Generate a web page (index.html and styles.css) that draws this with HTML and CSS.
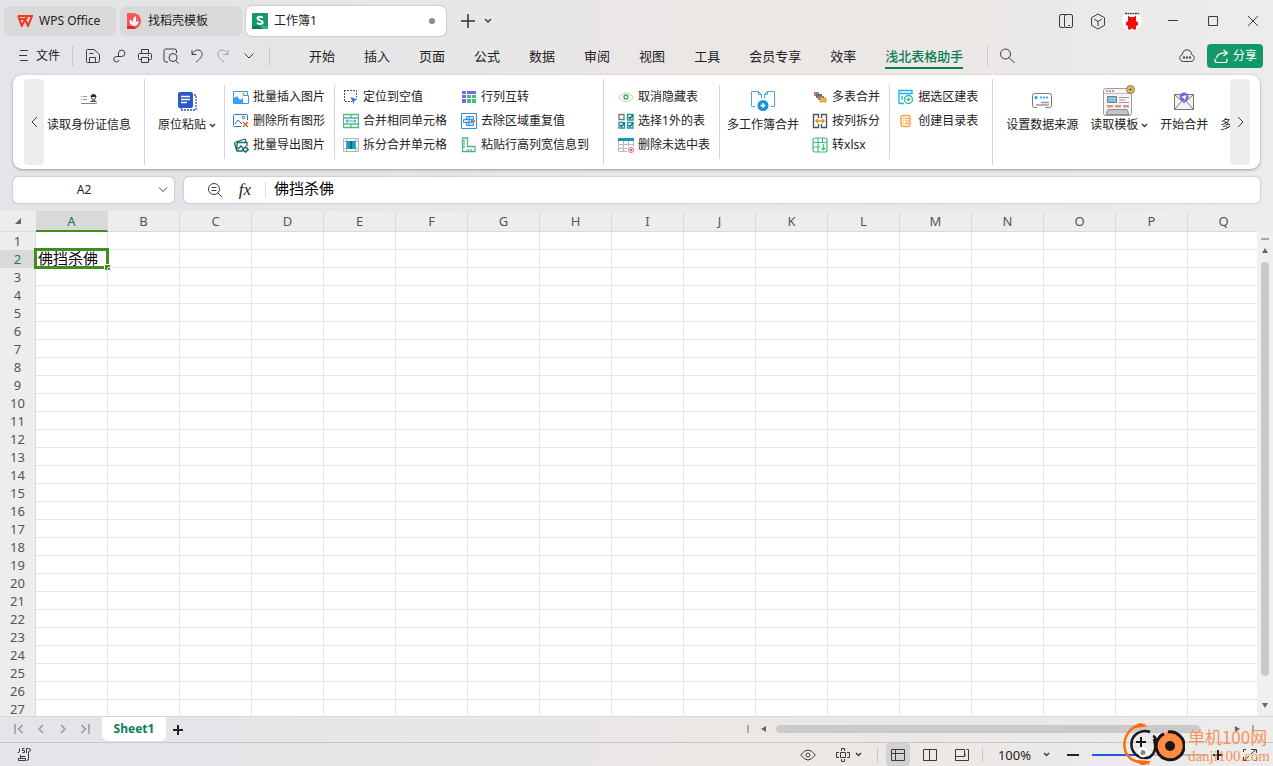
FILE: index.html
```html
<!DOCTYPE html>
<html lang="zh-CN">
<head>
<meta charset="utf-8">
<title>工作簿1 - WPS Office</title>
<link rel="stylesheet" href="styles.css">
</head>
<body>
<header class="titlebar">
  <button class="doc-tab home"><svg width="16" height="12" viewBox="0 0 16 12"><path d="M1 1h9.500L9 4H2.500M1.200 1l3.600 10L8 4.500l3 6.500L15 1h-4" fill="none" stroke="#f5361f" stroke-width="2"/></svg>WPS Office</button>
  <button class="doc-tab docer"><svg width="16" height="16" viewBox="0 0 16 16"><path d="M1 0h6a8 8 0 0 1 0 16H1z" fill="#f4575a"/><path d="M1 13h6l3 3H1z" fill="#d92c30"/><path d="M7 13C3 11 3.500 8 4 6.500c2 1 3 3 3 6.500zM7 13c-1-4 0-8 2.500-10C11 6 10 10 7 13zM7.500 13c1-3 2.500-4.500 5-5 0 3-2 5-5 5z" fill="#fff"/></svg>找稻壳模板</button>
  <button class="doc-tab current"><svg width="16" height="16" viewBox="0 0 16 16"><rect width="16" height="16" rx="1" fill="#14996a"/><path d="M0 13h8l3 3H0z" fill="#0a7a50"/><path d="M8 13h8v3h-5z" fill="#35b383"/><path d="M10.800 4.800C10 3.500 5.500 3 5.500 5.300S10.700 7 10.700 9.300 6 11.400 5.200 9.700" fill="none" stroke="#fff" stroke-width="1.900"/></svg>工作簿1<i class="dot"></i></button>
  <button class="icon-btn add" aria-label="新建"><svg width="14" height="14" viewBox="0 0 14 14"><path d="M7 0v14M0 7h14" stroke="#333" stroke-width="1.500"/></svg></button>
  <button class="icon-btn" aria-label="标签列表"><svg width="8" height="6" viewBox="0 0 8 6"><path d="M1 1l3 3 3-3" class="ln b"/></svg></button>
  <div class="window-tools">
    <button class="icon-btn" aria-label="布局"><svg width="14" height="14" viewBox="0 0 14 14" class="ln"><path d="M5.500 13.500H2q-1.500 0-1.500-1.500V2Q.5.500 2 .500h10q1.500 0 1.500 1.500v10q0 1.500-1.500 1.500H7q-1.500 0-1.500-1.500V2.500q0-2 2-2M9 11.500h2"/></svg></button>
    <button class="icon-btn" aria-label="应用"><svg width="16" height="17" viewBox="0 0 16 17" class="ln"><path d="M8 1l6.500 3.700v7.600L8 16l-6.500-3.700V4.700zM4 6l4 2.500L12 6M8 8.500V13"/></svg></button>
    <button class="icon-btn" aria-label="账户"><svg width="20" height="20" viewBox="0 0 20 20"><circle cx="10" cy="10" r="10" fill="#fff"/><path d="M3 2.500h14" stroke="#444" stroke-width="1.500" stroke-dasharray="2 .5"/><path d="M6 4.500l2 1.500h4l2-1.500v5.500l2 1.500v3h-2v4h-3v-1h-2v1H6v-4H4v-3L6 10z" fill="#f60d0d"/><path d="M8 8v1M12 8v1" stroke="#600"/></svg></button>
    <button class="icon-btn" aria-label="最小化"><svg width="10" height="10" viewBox="0 0 10 10" class="ln"><path d="M0 4.500h10"/></svg></button>
    <button class="icon-btn" aria-label="最大化"><svg width="10" height="10" viewBox="0 0 10 10" class="ln"><path d="M.5.5h9v9h-9z"/></svg></button>
    <button class="icon-btn" aria-label="关闭"><svg width="10" height="10" viewBox="0 0 10 10" class="ln"><path d="M0 0l10 10M10 0L0 10"/></svg></button>
  </div>
</header>

<nav class="menubar">
  <button class="file"><svg width="9" height="12" viewBox="0 0 9 12" class="ln"><path d="M1 .5h8M0 5.500h8M1 10.500h8"/></svg>文件</button>
  <div class="quick">
    <button class="icon-btn" aria-label="保存"><svg width="16" height="16" viewBox="0 0 16 16" class="ln"><path d="M2.500 1.500H9l5.500 5v6q0 2-2 2h-10q-1 0-1-1v-11q0-1 1-1zM4.500 14V9.500h6V14M4.500 5.500h4"/></svg></button>
    <button class="icon-btn" aria-label="输出"><svg width="16" height="16" viewBox="0 0 16 16" class="ln"><path d="M7.500 8.500V5a3.200 3.200 0 1 1 3.200 3.500H5.500a2.700 2.700 0 1 0 2.500 3.500"/></svg></button>
    <button class="icon-btn" aria-label="打印"><svg width="16" height="16" viewBox="0 0 16 16" class="ln"><path d="M4.500 5V1.500h7V5M4.500 11.500h-2q-1 0-1-1v-4q0-1 1-1h11q1 0 1 1v4q0 1-1 1h-2M4.500 9.500h7v5h-7zM11 7.500h1"/></svg></button>
    <button class="icon-btn" aria-label="打印预览"><svg width="16" height="16" viewBox="0 0 16 16" class="ln"><path d="M13.500 5V3q0-2-2-2h-9q-1.500 0-1.500 1.500V12q0 2 2 2h2M13 13l2.500 2.500"/><circle cx="10" cy="9.500" r="4"/></svg></button>
    <button class="icon-btn" aria-label="撤销"><svg width="16" height="16" viewBox="0 0 16 16" class="ln"><path d="M3 2v4.500h4.500M3 6.500C7-1 13.500 2 13 6.500 12.800 9 11 11 7 14"/></svg></button>
    <button class="icon-btn faded" aria-label="恢复"><svg width="16" height="16" viewBox="0 0 16 16" class="ln"><path d="M13 2v4.500H8.500M13 6.500C9-1 2.500 2 3 6.500 3.200 9 5 11 9 14"/></svg></button>
    <button class="icon-btn" aria-label="更多"><svg width="16" height="16" viewBox="0 0 16 16" class="ln"><path d="M3.500 5.500L8 10l4.500-4.500"/></svg></button>
  </div>
  <div class="menu-tabs">
    <button>开始</button><button>插入</button><button>页面</button><button>公式</button><button>数据</button><button>审阅</button><button>视图</button><button>工具</button><button>会员专享</button><button>效率</button><button class="on">浅北表格助手</button>
  </div>
  <button class="icon-btn search" aria-label="搜索"><svg width="16" height="16" viewBox="0 0 16 16" class="ln"><circle cx="6.500" cy="6" r="5"/><path d="M10 9.500l5.500 5.500"/></svg></button>
  <button class="icon-btn cloud" aria-label="云同步"><svg width="16" height="14" viewBox="0 0 16 14" class="ln"><path d="M4.500 12.500C0 12.500-.5 7 3.300 5.500 4-.7 12-.7 12.700 5.500 16.500 7 16 12.500 11.500 12.500z"/><path d="M4 8.500h8" stroke-width="2" stroke-dasharray="2 1"/></svg></button>
  <button class="share"><svg width="15" height="14" viewBox="0 0 15 14" fill="none" stroke="#fff" stroke-width="1.200"><path d="M9.500 1l4 3-4 3M13 4C7 3.500 3.500 5 2.500 9M1 9.500v2q0 2 2 2h8q2 0 2-2v-2"/></svg>分享</button>
</nav>

<section class="ribbon">
  <button class="scroll" aria-label="向左滚动"><svg width="7" height="12" viewBox="0 0 7 12" class="ln"><path d="M6 1L1 6l5 5"/></svg></button>
  <div class="ribbon-view">
    <div class="group first">
      <button class="big"><svg class="card" width="18" height="12" viewBox="0 0 18 12"><path d="M1 3.500h6M1 6.500h6" stroke="#999" stroke-dasharray="1 1 4 0"/><path d="M1 10.500h16" stroke="#888"/><circle cx="13.500" cy="4.500" r="2" fill="#fff" stroke="#334"/><path d="M10.500 4c0-4 6-4 6 0z" fill="#223047"/><path d="M10 9c1-2.500 6-2.500 7 0z" fill="#46536b"/></svg>读取身份证信息</button>
    </div>
    <div class="group wide">
      <button class="big"><svg width="20" height="20" viewBox="0 0 20 20"><path d="M17 4h2v15H4v-2" fill="none" stroke="#2b57c8" stroke-width="1.300" stroke-dasharray="2 1"/><rect x="1" y="1" width="15" height="16" rx="2" fill="#2b57c8"/><path d="M4 5.500h9M4 8.500h9M4 11.500h6" stroke="#fff" stroke-width="1.300"/></svg><span>原位粘贴<svg width="7" height="5" viewBox="0 0 7 5"><path d="M1 1l2.500 2.500L6 1" class="ln b"/></svg></span></button>
    </div>
    <div class="group short">
      <div class="stack">
        <button><svg viewBox="0 0 16 16"><path d="M.5 14.500v-12H14.500V6M.5 14.500h15V6.500H10" fill="none" stroke="#3d95f0"/><path d="M1 14V9l3-2 3 4 3-2v5z" fill="#38a1f4"/><circle cx="10.500" cy="4.500" r="1.200" fill="#f7b733"/></svg>批量插入图片</button>
        <button><svg viewBox="0 0 16 16" fill="none" stroke="#2874c9"><path d="M14.500 7V2.500q0-1-1-1h-12q-1 0-1 1v10q0 1 1 1H8M2 11l3-4 4 4"/><circle cx="10.500" cy="4.500" r="1.300"/><path d="M10 9l5 5M15 9l-5 5" stroke="#ef5b2b" stroke-width="1.400"/></svg>删除所有图形</button>
        <button><svg viewBox="0 0 16 16" fill="none" stroke="#176b6d" stroke-width="1.300"><path d="M1.500 5.500L12 2l1 3M3.500 13L1.500 6M4 5.500h10V9M4 5.500v8.500h6M5 12l3-3 2 2"/><circle cx="12.500" cy="12.500" r="2"/><path d="M12.500 9v1M12.500 15v1M9 12.500h1M15 12.500h1"/></svg>批量导出图片</button>
      </div>
    </div>
    <div class="group pair">
      <div class="stack">
        <button><svg viewBox="0 0 16 16"><path d="M1 1.500h12.500v7M1.500 1v11.500H9" fill="none" stroke="#555" stroke-dasharray="2 1"/><path d="M7.500 8l7 2.500-3 1.200L10.500 15z" fill="#3a6df0"/></svg>定位到空值</button>
        <button><svg viewBox="0 0 16 16" fill="none" stroke="#56b985"><path d="M.5 1.500h15v13H.5zM.5 5h15M.5 11h15M8 1v4M8 11v4" stroke-width="1.300"/><path d="M3 8h10M5 6.500L3 8l2 1.500M11 6.500L13 8l-2 1.500" stroke="#3aa0e8"/></svg>合并相同单元格</button>
        <button><svg viewBox="0 0 16 16"><path d="M.5 1.500h15v13H.5zM3.500 1v14M12.500 1v14M0 4.500h16M0 11.500h16" fill="none" stroke="#b5b5b5"/><path d="M3.500 4h9v8h-9z" fill="#0ba5bd"/><path d="M8 4v8" stroke="#235"/></svg>拆分合并单元格</button>
      </div>
      <div class="stack">
        <button><svg viewBox="0 0 16 16"><path d="M1 2h4v3H1zM6 2h9v3H6zM1 6h4v3H1zM1 10h4v4H1z" fill="#6f6ce6"/><path d="M6 6h4v3H6zM11 6h4v3h-4zM6 10h4v4H6zM11 10h4v4h-4z" fill="#4aba79"/></svg>行列互转</button>
        <button><svg viewBox="0 0 16 16" fill="none" stroke="#2f8fe8"><path d="M.5.5h15v15H.5z"/><path d="M5.500 3.500h7v3h-7zM2.500 6.500h8v3h-8zM5.500 9.500h7v3h-7zM8 3v10" fill="#cfe6fb"/><path d="M11 7l3 2M14 7l-3 2" stroke="#f04b52"/></svg>去除区域重复值</button>
        <button><svg viewBox="0 0 16 16" fill="none" stroke="#53b487" stroke-width="1.300"><path d="M1.500 1h5v8.500H14v5H1.500zM2 4h2M2 7h2M2 10h2M7 14v-2M10 14v-2"/></svg>粘贴行高列宽信息到</button>
      </div>
    </div>
    <div class="group short sheets">
      <div class="stack">
        <button><svg viewBox="0 0 16 16" fill="none"><path d="M.5 8.500Q8-1 15.500 8.500 8 17 .5 8.500z" stroke="#b8d98e"/><circle cx="8" cy="8" r="2" stroke="#31a95b" stroke-width="1.300"/></svg>取消隐藏表</button>
        <button><svg viewBox="0 0 16 16" fill="none" stroke="#1793b5" stroke-width="1.300"><path d="M1 1.500h5v5H1z" stroke="#777"/><path d="M9.500 1.500h5.500v5.500H9.500zM1 9.500h5.500V15H1zM9.500 9.500h5.500V15H9.500z"/><path d="M10.500 4l1.500 1.500 3-3.500M2 12l1.500 1.500 3-3.500M10.500 12l1.500 1.500 3-3.500" stroke="#176d3c" stroke-width="1.500"/></svg>选择1外的表</button>
        <button><svg viewBox="0 0 16 16" fill="none"><path d="M.5 2v12.500H9M15.500 2v7M5.500 4v10M10.500 4v5M1 7.500h14M1 11.500h8" stroke="#bbb"/><path d="M0 2.500h16" stroke="#1797b4" stroke-width="3"/><circle cx="13" cy="13" r="2.500" stroke="#f06470"/><path d="M12 12l2 2M14 12l-2 2" stroke="#f06470"/></svg>删除未选中表</button>
      </div>
    </div>
    <div class="group short merge">
      <button class="big"><svg width="26" height="22" viewBox="0 0 26 22"><path d="M5 16.500H1.500v-15h7l3 3v4M8.500 1.500v3h3M21 16.500h3.500v-15h-7l-3 3v4M17.500 1.500v3h-3" fill="none" stroke="#46a9e6"/><circle cx="13" cy="15.500" r="5.500" fill="#1891dc"/><path d="M13 13v5M10.500 15.500h5" stroke="#fff" stroke-width="1.500"/></svg>多工作簿合并</button>
      <div class="stack">
        <button><svg viewBox="0 0 16 16"><path d="M2 3h5v4H2z" fill="#c57761"/><path d="M4 5h6v4H4z" fill="#68706b"/><path d="M6 7h6v4H6z" fill="#9a816f"/><path d="M8 8h2l1 1h3v4H8z" fill="#efbb3d" stroke="#765" stroke-width=".5"/></svg>多表合并</button>
        <button><svg viewBox="0 0 16 16" fill="none" stroke="#4b5360" stroke-width="1.400"><path d="M6.500 5V1.500h-5v13h5V11M9.500 5V1.500h5v13h-5V11"/><path d="M3.500 8h9M6 6L4 8l2 2M10 6l2 2-2 2" stroke="#f28b16"/></svg>按列拆分</button>
        <button><svg viewBox="0 0 16 16" fill="none" stroke="#3fbd7b" stroke-width="1.200"><rect x="1" y="1" width="14" height="14" rx="2"/><path d="M1 5.500h14M1 10h7M6 1v14M10.500 1v4M11.500 7v6M9.500 11l2 2 2-2"/></svg>转xlsx</button>
      </div>
    </div>
    <div class="group last-stack">
      <div class="stack">
        <button><svg viewBox="0 0 16 16" fill="none" stroke="#1cb2e2" stroke-width="1.300"><path d="M6 14.500H1v-13h13v4M1 4.500h13M4 7v4"/><circle cx="10.500" cy="10.500" r="4"/><path d="M8.500 10.500h4M10.500 8.500v4" stroke="#6bb52d"/></svg>据选区建表</button>
        <button><svg viewBox="0 0 16 16" fill="none" stroke="#f2aa4d"><rect x="3" y="2.500" width="9" height="11" rx="1.500" fill="#fdf1df" stroke-width="1.500"/><path d="M5 5.500h1M7 5.500h4M5 8h1M7 8h4M5 10.500h1M7 10.500h4"/></svg>创建目录表</button>
      </div>
    </div>
    <div class="group mail">
      <button class="big"><svg width="20" height="16" viewBox="0 0 20 16"><path d="M5 14.500H2.500q-2 0-2-2v-10q0-2 2-2h15q2 0 2 2v10q0 2-2 2H13" fill="none" stroke="#777"/><path d="M8 4.500h8" stroke="#40b4e8" stroke-width="2" stroke-dasharray="2 1"/><circle cx="4" cy="4.500" r="1.500" fill="#169fe0"/><path d="M9 9.500h8M4 12h13" stroke="#999" stroke-width="1.400"/></svg>设置数据来源</button>
      <button class="big"><svg width="34" height="32" viewBox="0 0 34 32"><rect x="1.500" y="3.500" width="28" height="27" rx="2" fill="#f5f5f6" stroke="#9b9da2"/><path d="M2 8.500h27" stroke="#bbb"/><path d="M4 6h8" stroke="#e0705a" stroke-width="1.500" stroke-dasharray="2 1"/><path d="M5.500 11.500h9v6h-9z" fill="#79c9dc" stroke="#778"/><path d="M17 12.500h10M17 15h6M17 17.500h10" stroke="#999"/><path d="M5 20h6v2.500H5zM13 20h6v2.500h-6zM21 20h6v2.500h-6z" fill="#d9968c"/><path d="M6 24.500h19l2 5H4z" fill="#c2c4ca" stroke="#8d8e94"/><circle cx="28.500" cy="4.500" r="4" fill="#edc34e" stroke="#777"/><path d="M28.500 2.500v4M26.500 4.500h4" stroke="#775"/></svg><span>读取模板<svg width="7" height="5" viewBox="0 0 7 5"><path d="M1 1l2.500 2.500L6 1" class="ln b"/></svg></span></button>
      <button class="big"><svg width="22" height="20" viewBox="0 0 22 20"><path d="M1.500 3.500h19v15h-19z" fill="#f2f2f2" stroke="#777"/><path d="M1.500 3.500L11 12l9.500-8.500M1.500 18.500l7-8M20.500 18.500l-7-8" fill="none" stroke="#777"/><circle cx="11" cy="6" r="4.500" fill="#6470da"/><path d="M8 6l5.500-2-1.500 5-1.500-2z" fill="#fff"/></svg>开始合并</button>
      <button class="big">多</button>
    </div>
  </div>
  <button class="scroll" aria-label="向右滚动"><svg width="7" height="12" viewBox="0 0 7 12" class="ln"><path d="M1 1l5 5-5 5"/></svg></button>
</section>

<section class="formula-row">
  <div class="name-box"><input type="text" value="A2" aria-label="名称框"><button class="icon-btn" aria-label="展开名称"><svg width="10" height="6" viewBox="0 0 10 6" class="ln"><path d="M1 .5l4 4 4-4"/></svg></button></div>
  <div class="formula-box">
    <button class="icon-btn" aria-label="浏览公式"><svg width="16" height="16" viewBox="0 0 16 16" class="ln"><circle cx="7" cy="7" r="5.500"/><path d="M11 11l4 4M4.500 5.500h5M4.500 8.500h5"/></svg></button>
    <button class="fx" aria-label="插入函数">fx</button>
    <input type="text" value="佛挡杀佛" aria-label="编辑栏">
  </div>
</section>

<main class="sheet">
  <div class="grid-view"><table class="grid"><thead></thead><tbody></tbody></table></div>
  <div class="vscroll">
    <i class="split"></i>
    <svg width="6" height="6" viewBox="0 0 6 6"><path d="M3 0l3 5H0z" fill="#666"/></svg>
    <i class="thumb"></i>
    <svg width="6" height="6" viewBox="0 0 6 6"><path d="M3 6l3-5H0z" fill="#666"/></svg>
  </div>
</main>

<section class="sheetbar">
  <div class="sheet-nav">
    <button class="icon-btn" aria-label="第一张"><svg width="10" height="10" viewBox="0 0 10 10"><path d="M1 0v10M8.500 1l-4 4 4 4"/></svg></button>
    <button class="icon-btn" aria-label="上一张"><svg width="10" height="10" viewBox="0 0 10 10"><path d="M7 1L3 5l4 4"/></svg></button>
    <button class="icon-btn" aria-label="下一张"><svg width="10" height="10" viewBox="0 0 10 10"><path d="M3 1l4 4-4 4"/></svg></button>
    <button class="icon-btn" aria-label="最后一张"><svg width="10" height="10" viewBox="0 0 10 10"><path d="M9 0v10M1.500 1l4 4-4 4"/></svg></button>
  </div>
  <button class="sheet-tab">Sheet1</button>
  <button class="icon-btn add-sheet" aria-label="新建工作表"><svg width="10" height="10" viewBox="0 0 10 10"><path d="M5 0v10M0 5h10" stroke="#222" stroke-width="2"/></svg></button>
  <div class="hscroll">
    <i class="bar"></i>
    <svg width="6" height="6" viewBox="0 0 6 6"><path d="M0 3l5-3v6z" fill="#666"/></svg>
    <div class="track"><i class="thumb"></i></div>
    <svg width="6" height="6" viewBox="0 0 6 6"><path d="M6 3L1 0v6z" fill="#666"/></svg>
    <i class="bar"></i>
  </div>
</section>

<footer class="statusbar">
  <button class="icon-btn" aria-label="JS 宏"><svg width="14" height="14" viewBox="0 0 14 14" class="ln"><path d="M2.500.5v3q0 1-2 1M7.500.5h-2v2h2v2h-2M9.500 5V.5h2q2 0 2 1.500t-2 1.500M11.500 4v7q0 1.500-2 1.500M3.500 7v3M3.500 8.500h5M1.500 10.500h7v2h-7z"/></svg></button>
  <div class="status-tools">
    <button class="icon-btn eye" aria-label="护眼模式"><svg width="16" height="12" viewBox="0 0 16 12" class="ln"><path d="M.7 6Q8-4 15.300 6 8 16 .7 6z"/><circle cx="8" cy="6" r="2"/></svg></button>
    <button class="focus" aria-label="阅读模式"><svg width="14" height="14" viewBox="0 0 14 14" class="ln"><path d="M4.500 4.500h5v5h-5zM5.500 3V.5h3V3M5.500 11v2.500h3V11M3 4.500H.5v5H3M11 4.500h2.500v5H11"/></svg><svg width="7" height="5" viewBox="0 0 7 5"><path d="M1 1l2.500 2.500L6 1" class="ln b"/></svg></button>
    <button class="view on" aria-label="普通视图"><svg width="14" height="12" viewBox="0 0 14 12" class="ln"><path d="M.5.500h13v11H.5zM.5 4.500h13M4.500.5v11"/></svg></button>
    <button class="view" aria-label="分页预览"><svg width="14" height="12" viewBox="0 0 14 12" class="ln"><path d="M.5.500h13v11H.5zM6.500.5v11"/></svg></button>
    <button class="view" aria-label="页面布局"><svg width="14" height="12" viewBox="0 0 14 12" class="ln"><path d="M.5.500h9v7H.5zM.5 7v4.500h13V.5h-2M10 7.500v-3"/></svg></button>
    <button class="zoom">100%<svg width="7" height="5" viewBox="0 0 7 5"><path d="M1 1l2.500 2.500L6 1" class="ln b"/></svg></button>
    <button class="icon-btn" aria-label="缩小"><svg width="12" height="12" viewBox="0 0 12 12"><path d="M0 6h12" stroke="#222" stroke-width="2"/></svg></button>
    <input class="slider" type="range" min="0" max="100" value="46" aria-label="缩放">
    <button class="icon-btn" aria-label="放大"><svg width="12" height="12" viewBox="0 0 12 12"><path d="M1 6h10M6 1v10" stroke="#222" stroke-width="2"/></svg></button>
    <button class="icon-btn full" aria-label="全屏"><svg width="14" height="12" viewBox="0 0 14 12" class="ln"><path d="M8 .5h5.500V4M13 .5L8 5M6 11.500H.5V8M1 11.500L6 7M.5 3V.5H3M13.500 9v2.500H11"/></svg></button>
  </div>
</footer>

<aside class="watermark">
  <svg width="62" height="42" viewBox="0 0 62 42" fill="none"><path d="M22 2H16C-3 8-4 36 16 39l9 1v-1" stroke="#ff6d0a" stroke-width="2.500"/><path d="M12 4l5-3 4 2zM14 38l6 4 5-3z" fill="#ff6d0a" stroke="#ff6d0a" stroke-width="2"/><path d="M27 9a13.500 13.500 0 1 0 0 25c6-5 6-10 4-18" stroke="#1b1718" stroke-width="2.500"/><path d="M18 14v10M13 19h10" stroke="#1b1718" stroke-width="2"/><circle cx="47" cy="23" r="14" fill="#ff8c42"/><path d="M45 9a14 14 0 1 1-11 9c2-4 4-6 7-7" stroke="#1b1718" stroke-width="3"/><path d="M30 13c3 1 4 6 3 10" stroke="#1b1718" stroke-width="2.500"/><circle cx="47" cy="23" r="5" fill="#1b1718"/><circle cx="20" cy="29.500" r="5" fill="#fff"/><circle cx="20" cy="29.500" r="2.500" fill="#888"/></svg>
  <div><b>单机100网</b><span>danji100.com</span></div>
</aside>
<script src="script.js"></script>
</body>
</html>
```
FILE: styles.css
```css
* { box-sizing: border-box; }
html, body { height: 100%; }
body {
  margin: 0;
  display: flex;
  flex-direction: column;
  overflow: hidden;
  font: 12px/16px "Noto Sans", "Noto Sans CJK SC", sans-serif;
  color: #222;
  background: linear-gradient(90deg, #e4e4e9 0%, #e6e6e9 25%, #ebe7e5 55%, #ebe8e6 75%, #ececec 100%);
}
button {
  margin: 0;
  padding: 0;
  border: 0;
  background: none;
  font: inherit;
  color: inherit;
  white-space: nowrap;
}
input { font: inherit; color: inherit; border: 0; padding: 0; margin: 0; background: none; min-width: 0; outline: 0; }
svg { display: block; flex: none; }
.ln { fill: none; stroke: #3c3c3c; stroke-width: 1; }
.b { stroke-width: 1.5; }
.icon-btn { display: flex; align-items: center; justify-content: center; flex: none; width: 20px; height: 20px; }

/* title bar */
.titlebar { display: flex; align-items: center; height: 42px; padding: 0 4px; flex: none; }
.doc-tab { display: flex; align-items: center; height: 30px; margin-right: 4px; border-radius: 6px; background: #d9d9d9; text-align: left; }
.home { width: 112px; padding-left: 13px; gap: 6px; }
.docer { width: 122px; padding-left: 6px; gap: 6px; }
.current { width: 200px; padding: 0 11px 0 6px; gap: 6px; background: #fff; box-shadow: 0 0 2px #999; }
.dot { width: 6px; height: 6px; margin-left: auto; border-radius: 50%; background: #8c8c8c; }
.add { margin-left: 8px; }
.window-tools { display: flex; margin-left: auto; margin-right: 6px; gap: 20px; }
.window-tools .icon-btn:nth-child(1) { margin-right: -8px; }
.window-tools .icon-btn:nth-child(2) { margin-right: -6px; }
.window-tools .icon-btn:nth-child(3) { margin-right: 1px; }

/* menu bar */
.menubar { display: flex; align-items: center; height: 33px; padding: 0 10px 6px 19px; flex: none; }
.file { display: flex; align-items: center; gap: 8px; }
.quick { display: flex; gap: 6px; margin-left: 12px; padding: 0 10px; border: solid #c9c9cb; border-width: 0 1px; }
.faded { opacity: .4; }
.menu-tabs { display: flex; gap: 29px; margin-left: 39px; font-size: 13px; line-height: 20px; }
.menu-tabs button { padding: 3px 0 1px; border-bottom: 2px solid transparent; }
.menu-tabs .on { color: #0b7e55; border-color: #0b7e55; font-weight: 500; }
.search { width: 38px; margin-left: 24px; border-left: 1px solid #c9c9cb; }
.cloud { margin-left: auto; }
.share { display: flex; align-items: center; gap: 4px; height: 24px; padding: 0 6px 0 7px; margin-left: 10px; border-radius: 4px; background: #149868; color: #fff; }

/* ribbon */
.ribbon { display: flex; flex: none; margin: 0 13px; padding: 4px 10px 4px 11px; border-radius: 9px; background: #fff; box-shadow: 0 1px 3px #999; }
.scroll { display: flex; align-items: center; justify-content: center; width: 20px; height: 86px; flex: none; border-radius: 4px; background: #ededed; }
.ribbon-view { display: flex; flex: 1; min-width: 0; overflow: hidden; }
.group { display: flex; flex: none; border-right: 1px solid #d6d6d6; }
.group.short { margin: 6px 0; }
.first { padding: 6px 13px 0 3px; }
.wide { padding: 6px 8px 0 13px; border: 0; }
.short { padding: 0 9px 0 8px; }
.wide + .short { border-left: 1px solid #d6d6d6; }
.pair { gap: 14px; padding: 6px 14px 0 8px; }
.sheets { padding-left: 14px; }
.merge { padding-left: 7px; gap: 13px; }
.last-stack { padding: 6px 14px 0 8px; }
.mail { gap: 12px; padding: 6px 0 0 13px; border: 0; }
.stack { display: flex; flex-direction: column; }
.stack button { display: flex; align-items: center; gap: 4px; height: 24px; }
.stack svg { width: 16px; height: 16px; }
.big { display: flex; flex-direction: column; align-items: center; align-self: flex-start; height: 48px; justify-content: flex-end; }
.big > svg { margin: auto; }
.big > .card { margin: auto auto 12px; }
.big span { display: flex; align-items: center; gap: 3px; }

/* formula row */
.formula-row { display: flex; gap: 10px; margin: 8px 13px; flex: none; }
.name-box, .formula-box { display: flex; align-items: center; height: 26px; border-radius: 5px; background: #fff; box-shadow: 0 0 2px #999; }
.name-box { width: 161px; padding-right: 1px; }
.name-box input { flex: 1; padding-left: 2px; text-align: center; }
.formula-box { flex: 1; padding-left: 21px; }
.fx { width: 41px; height: 16px; border-right: 1px solid #ddd; font: italic 17px/16px "Liberation Serif", serif; }
.formula-box input { flex: 1; padding: 0 0 4px 8px; font-size: 15px; color: #000; }

/* sheet */
.sheet { display: flex; flex: 1; min-height: 0; background: #ededed; }
.grid-view { flex: 1; min-width: 0; overflow: hidden; }
.grid { table-layout: fixed; width: 1260px; border-collapse: separate; border-spacing: 0; font-size: 13px; line-height: 17px; background: #fff; }
.grid th { height: 18px; padding: 0 0 1px; font-weight: 400; color: #555; background: #ededed; border: solid #d9d9d9; border-width: 0 1px 0 0; line-height: 16px; }
.grid thead th { height: 21px; padding: 0; border-bottom-width: 1px; }
.grid thead th:first-child { width: 36px; border-right: 0; }
.grid thead svg { margin-left: 15px; }
.grid td { position: relative; height: 18px; padding: 0; border: solid #e5e5e5; border-width: 0 1px 1px 0; }
.grid th.on { background: #d9d9d9; color: #0b7e55; }
.grid thead th.on { border-bottom: 2px solid #3f8f1f; }
.cell-text { display: block; height: 17px; padding-left: 2px; font-size: 15px; color: #000; white-space: nowrap; }
.selection { position: absolute; inset: -2px; border: 3px solid #3f8f1f; }
.selection::after { content: ""; position: absolute; right: -4px; bottom: -4px; width: 5px; height: 5px; background: #3f8f1f; box-shadow: -1px -1px 0 #fff; }
.vscroll { display: flex; flex-direction: column; align-items: center; width: 16px; margin-top: 21px; padding: 6px 0 8px; gap: 8px; background: #f0f0f0; }
.split { width: 8px; height: 2px; background: #aaa; }
.vscroll .thumb { flex: 1; width: 8px; margin: 0 0 18px; border-radius: 4px; background: #cacaca; }

/* sheet tabs */
.sheetbar { display: flex; align-items: flex-start; height: 27px; flex: none; border-top: 1px solid #d7d7d9; border-bottom: 1px solid #c9c9cd; }
.sheet-nav { display: flex; gap: 2px; width: 102px; padding: 2px 0 0 9px; }
.sheet-nav path { fill: none; stroke: #999; stroke-width: 1.5; }
.sheet-tab { height: 24px; width: 64px; border-radius: 0 0 6px 6px; background: #fff; color: #0b7e55; font-weight: 700; }
.add-sheet { margin: 3px 0 0 2px; }
.hscroll { display: flex; align-items: center; width: 507px; height: 24px; margin: 0 19px 0 auto; gap: 12px; }
.bar { width: 2px; height: 8px; background: #aaa; }
.track { flex: 1; margin-left: -3px; }
.track .thumb { display: block; width: 95%; height: 8px; border-radius: 4px; background: #cbcaca; }

/* status bar */
.statusbar { display: flex; align-items: center; height: 23px; flex: none; padding: 0 13px 0 14px; }
.status-tools { display: flex; align-items: center; height: 23px; margin-left: auto; }
.eye { margin-right: 18px; }
.focus { display: flex; align-items: center; gap: 5px; height: 14px; padding-right: 15px; border-right: 1px solid #c6c6c6; margin-right: 8px; }
.view { display: flex; align-items: center; justify-content: center; width: 24px; height: 23px; margin-right: 8px; border-radius: 4px; }
.view.on { background: #d3d2d2; }
.zoom { display: flex; align-items: center; gap: 12px; padding-left: 15px; margin-right: 13px; border-left: 1px solid #c6c6c6; font-size: 13px; line-height: 14px; }
.slider { appearance: none; width: 114px; height: 2px; margin: 0 2px 0 9px; background: linear-gradient(90deg, #2456e0 46%, #bbb 46%); }
.slider::-webkit-slider-thumb { appearance: none; width: 10px; height: 10px; border: 3px solid #fff; border-radius: 50%; background: #888; }
.full { margin-left: 12px; }

/* floating site mark */
.watermark { position: absolute; right: 3px; bottom: 1px; display: flex; align-items: flex-end; gap: 3px; color: #f7935a; pointer-events: none; }
.watermark div { display: flex; flex-direction: column; }
.watermark b { font: 400 17px/20px "Noto Sans CJK SC", sans-serif; }
.watermark span { font: 15px/18px "Liberation Serif", serif; }
```
FILE: script.js
```javascript
const columns = "ABCDEFGHIJKLMNOPQ".split("");
const corner = '<svg width="6" height="6" viewBox="0 0 6 6"><path d="M6 0v6H0z" fill="#666"/></svg>';
document.querySelector(".grid thead").innerHTML =
  `<tr><th>${corner}</th>` + columns.map(c => `<th class="${c === "A" ? "on" : ""}">${c}</th>`).join("") + "</tr>";

let rows = "";
for (let r = 1; r <= 27; r++) {
  rows += `<tr><th class="${r === 2 ? "on" : ""}">${r}</th>`;
  for (const c of columns) {
    rows += r === 2 && c === "A"
      ? '<td><span class="cell-text">佛挡杀佛</span><i class="selection"></i></td>'
      : "<td></td>";
  }
  rows += "</tr>";
}
document.querySelector(".grid tbody").innerHTML = rows;
```
